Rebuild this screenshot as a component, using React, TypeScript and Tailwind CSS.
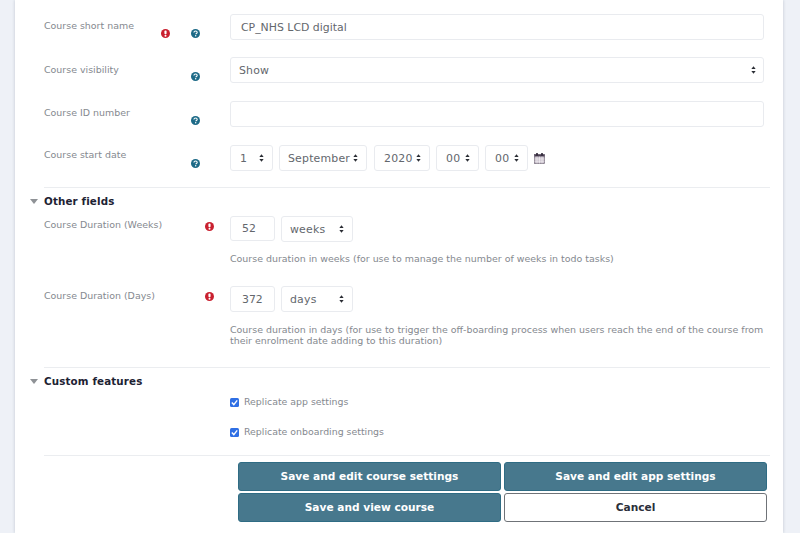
import React from "react";

const font = { fontFamily: '"DejaVu Sans", Verdana, sans-serif' };

function Req({ className = "" }: { className?: string }) {
  return (
    <svg viewBox="0 0 10 10" className={"w-[9px] h-[9px] shrink-0 " + className}>
      <circle cx="5" cy="5" r="5" fill="#c9202f" />
      <rect x="3.8" y="1.7" width="2.4" height="4" rx="1" fill="#fff" />
      <circle cx="5" cy="7.5" r="1.1" fill="#fff" />
    </svg>
  );
}

function Help({ className = "" }: { className?: string }) {
  return (
    <svg viewBox="0 0 10 10" className={"w-[9px] h-[9px] shrink-0 " + className}>
      <circle cx="5" cy="5" r="5" fill="#1d6a87" />
      <path d="M3.2 3.9C3.3 2.8 4 2.3 5 2.3c1.1 0 1.9.6 1.9 1.5 0 1.3-1.5 1.2-1.5 2.1" fill="none" stroke="#fff" strokeWidth="1.2" />
      <circle cx="5.2" cy="7.5" r="0.8" fill="#fff" />
    </svg>
  );
}

function Arrows() {
  return (
    <svg viewBox="0 0 6 9" className="w-[5px] h-[8px] shrink-0">
      <path d="M3 0L5.6 3.4H.4zM3 9L.4 5.6H5.6z" fill="#2a2d34" />
    </svg>
  );
}

function Sel({ w, value, pad = "pl-[9px] pr-[8px]" }: { w: string; value: string; pad?: string }) {
  return (
    <div className={`${w} ${pad} h-[26px] shrink-0 flex items-center justify-between bg-white border border-[#e9ebef] rounded-[3px] text-[10.9px] text-[#63676d]`}>
      <span className="tracking-[0.2px] pt-[2px]">{value}</span>
      <Arrows />
    </div>
  );
}

function Label({ children, className = "" }: { children: React.ReactNode; className?: string }) {
  return <div className={"text-[9.45px] leading-[14px] text-[#85898f] " + className}>{children}</div>;
}

function Caret() {
  return (
    <svg viewBox="0 0 8 5" className="w-[8px] h-[5px] absolute left-[-14px] top-[5px]">
      <path d="M0 0H8L4 5z" fill="#8f9296" />
    </svg>
  );
}

function SectionHead({ children }: { children: React.ReactNode }) {
  return (
    <div className="relative text-[10.3px] leading-[14px] font-bold text-[#1d2233] tracking-[0.15px]">
      <Caret />
      {children}
    </div>
  );
}

function Check({ label, className = "" }: { label: string; className?: string }) {
  return (
    <div className={"flex items-center gap-[5px] h-[14px] " + className}>
      <svg viewBox="0 0 9 9" className="w-[9px] h-[9px] shrink-0">
        <rect width="9" height="9" rx="1.5" fill="#2f6fe4" />
        <path d="M1.8 4.6L3.8 6.6L7.2 2.4" fill="none" stroke="#fff" strokeWidth="1.4" />
      </svg>
      <span className="text-[9.4px] text-[#85898f]">{label}</span>
    </div>
  );
}

function Btn({ label, light = false }: { label: string; light?: boolean }) {
  return (
    <div
      className={
        "h-[29px] flex items-center justify-center rounded-[3px] text-[10.6px] font-bold " +
        (light
          ? "bg-white border border-[#6f7378] text-[#2b2f3a]"
          : "bg-[#47788d] border border-[#2f6c84] text-white")
      }
    >
      {label}
    </div>
  );
}

export default function App() {
  return (
    <div style={font} className="h-[533px] w-[800px] overflow-hidden bg-[#eef1f7] pl-[15px] pr-[17px]">
      <div className="h-full bg-white pl-[29px] pr-[13px] pt-[14px] shadow-[0_0_3px_rgba(90,100,120,0.3)]">
        {/* Course short name */}
        <div className="flex h-[26px]">
          <div className="w-[186px] shrink-0 relative">
            <Label className="pt-[5px]">Course short name</Label>
            <Req className="absolute left-[117px] top-[14.5px]" />
            <Help className="absolute left-[147px] top-[14.5px]" />
          </div>
          <div className="w-[534px] h-[26px] flex items-center pl-[10px] pt-[2px] bg-white border border-[#e9ebef] rounded-[3px] text-[10.9px] text-[#63676d]">
            CP_NHS LCD digital
          </div>
        </div>
        {/* Visibility */}
        <div className="flex h-[26px] mt-[17px]">
          <div className="w-[186px] shrink-0 relative">
            <Label className="pt-[6px]">Course visibility</Label>
            <Help className="absolute left-[147px] top-[15px]" />
          </div>
          <Sel w="w-[534px]" value="Show" pad="pl-[8px] pr-[7px]" />
        </div>
        {/* ID number */}
        <div className="flex h-[26px] mt-[18px]">
          <div className="w-[186px] shrink-0 relative">
            <Label className="pt-[5px]">Course ID number</Label>
            <Help className="absolute left-[147px] top-[14.5px]" />
          </div>
          <div className="w-[534px] h-[26px] bg-white border border-[#e9ebef] rounded-[3px]" />
        </div>
        {/* Start date */}
        <div className="flex h-[26px] mt-[18px]">
          <div className="w-[186px] shrink-0 relative">
            <Label className="pt-[3px]">Course start date</Label>
            <Help className="absolute left-[147px] top-[13.5px]" />
          </div>
          <div className="flex items-center">
            <Sel w="w-[43px]" value="1" />
            <div className="ml-[6px]"><Sel w="w-[88px]" value="September" pad="pl-[8px] pr-[8px]" /></div>
            <div className="ml-[7px]"><Sel w="w-[56px]" value="2020" /></div>
            <div className="ml-[6px]"><Sel w="w-[43px]" value="00" /></div>
            <div className="ml-[6px]"><Sel w="w-[43px]" value="00" /></div>
            <svg viewBox="0 0 11 11" className="w-[11px] h-[11px] ml-[6px]">
              <rect x="0.5" y="1.5" width="10" height="9" fill="#c9c0cc" stroke="#6e6475" strokeWidth="0.7" />
              <rect x="0.5" y="1.5" width="10" height="2" fill="#4a3f52" />
              <rect x="2.2" y="0" width="1.6" height="2.6" fill="#2c2433" />
              <rect x="7.2" y="0" width="1.6" height="2.6" fill="#2c2433" />
              <path d="M0.5 6h10M0.5 8.2h10M3 3.5v7M5.5 3.5v7M8 3.5v7" stroke="#fff" strokeWidth="0.5" />
            </svg>
          </div>
        </div>

        <div className="h-px bg-[#ebedf0] mt-[16px] w-[726px]" />

        {/* Other fields */}
        <div className="mt-[6px]">
          <SectionHead>Other fields</SectionHead>
        </div>
        <div className="flex mt-[8px]">
          <div className="w-[186px] shrink-0 relative">
            <Label className="pt-[2px]">Course Duration (Weeks)</Label>
            <Req className="absolute left-[161px] top-[6px]" />
          </div>
          <div>
            <div className="flex gap-[6px]">
              <div className="w-[45px] h-[25px] flex items-center pl-[11px] pt-[2px] border border-[#e9ebef] rounded-[3px] text-[10.9px] text-[#63676d]">52</div>
              <Sel w="w-[72px]" value="weeks" pad="pl-[8px] pr-[8px]" />
            </div>
            <div className="mt-[11px] text-[9.45px] leading-[11px] text-[#85898f]">
              Course duration in weeks (for use to manage the number of weeks in todo tasks)
            </div>
          </div>
        </div>
        <div className="flex mt-[22px]">
          <div className="w-[186px] shrink-0 relative">
            <Label className="pt-[3px]">Course Duration (Days)</Label>
            <Req className="absolute left-[161px] top-[6px]" />
          </div>
          <div>
            <div className="flex gap-[6px]">
              <div className="w-[45px] h-[26px] flex items-center pl-[11px] pt-[2px] border border-[#e9ebef] rounded-[3px] text-[10.9px] text-[#63676d]">372</div>
              <Sel w="w-[72px]" value="days" pad="pl-[8px] pr-[8px]" />
            </div>
            <div className="mt-[12px] w-[540px] text-[9.45px] leading-[11px] text-[#85898f]">
              Course duration in days (for use to trigger the off-boarding process when users reach the end of the course from their enrolment date adding to this duration)
            </div>
          </div>
        </div>

        <div className="h-px bg-[#ebedf0] mt-[21px] w-[726px]" />

        {/* Custom features */}
        <div className="mt-[6px]">
          <SectionHead>Custom features</SectionHead>
        </div>
        <div className="pl-[186px]">
          <Check label="Replicate app settings" className="mt-[7px]" />
          <Check label="Replicate onboarding settings" className="mt-[16px]" />
        </div>

        <div className="h-px bg-[#ebedf0] mt-[16px] w-[726px]" />

        {/* Buttons */}
        <div className="mt-[6px] ml-[194px] w-[529px] grid grid-cols-2 gap-x-[3px] gap-y-[2px]">
          <Btn label="Save and edit course settings" />
          <Btn label="Save and edit app settings" />
          <Btn label="Save and view course" />
          <Btn label="Cancel" light />
        </div>
      </div>
    </div>
  );
}
